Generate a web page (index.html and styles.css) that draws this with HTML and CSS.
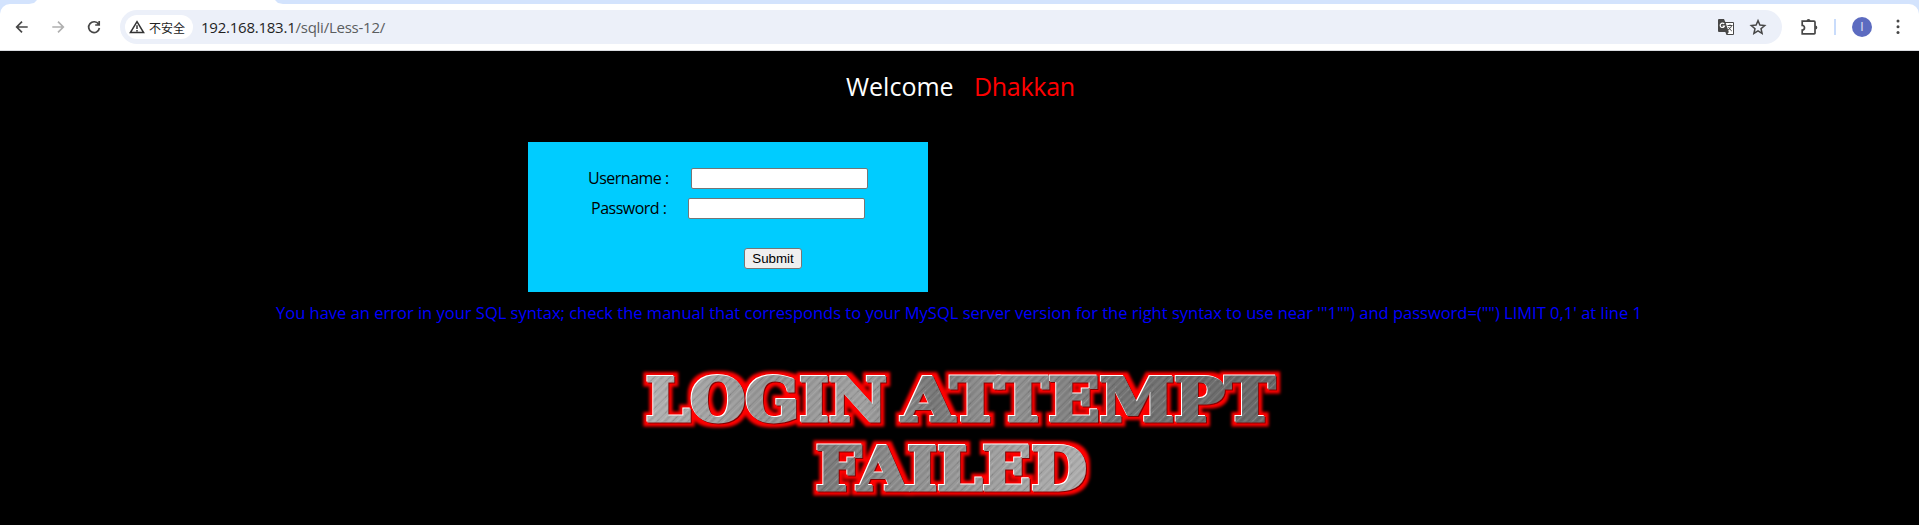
FILE: index.html
```html
<!DOCTYPE html>
<html lang="zh-CN">
<head>
<meta charset="utf-8">
<title>Less-12</title>
<link rel="stylesheet" href="styles.css">
</head>
<body>
<header class="browser">
  <div class="tabstrip"><span class="tab-left"></span><span class="tab-active"></span></div>
  <div class="toolbar">
    <nav class="nav">
      <svg class="ico" viewBox="0 0 20 20"><path d="M15.700 10H5M10 4.700L4.700 10l5.300 5.300"/></svg>
      <svg class="ico dim" viewBox="0 0 20 20"><path d="M4.300 10H15M10 4.700l5.300 5.300-5.300 5.300"/></svg>
      <svg class="ico" viewBox="0 0 20 20"><path d="M14.600 7.200A5.400 5.400 0 1 0 15.400 11M15.200 4v4h-4"/></svg>
    </nav>
    <div class="omnibox">
      <div class="chip">
        <svg class="warn" viewBox="0 0 16 14"><path d="M8 1.600L14.600 12.600H1.400ZM8 5.200v3.800M8 10v1.400"/></svg>
        <span class="chip-text">不安全</span>
      </div>
      <span class="url">192.168.183.1<span class="path">/sqli/Less-12/</span></span>
      <svg class="translate" viewBox="0 0 18 18"><path class="solid" d="M2 1h5l1.300 3H16a1 1 0 0 1 1 1v11a1 1 0 0 1-1 1H9.500l-1.200-3H2a1 1 0 0 1-1-1V2a1 1 0 0 1 1-1Z"/><path class="paper" d="M8.700 5H16v11h-5.500l1.300-2Z"/><path class="g" d="M7.200 6A2.200 2.200 0 1 0 7.500 8H5.500"/><path class="thin" d="M10.500 7.500h5M13 6.500v1M14.600 7.500c-.4 2-2 3.600-3.600 4.500M11.500 9c.8 1.600 2 3 3.300 4"/></svg>
      <svg class="star" viewBox="0 0 18 18"><path d="M9 2.600l1.900 4.500 4.800.4-3.700 3.200 1.100 4.700L9 12.900l-4.100 2.500L6 10.700 2.300 7.500l4.800-.4Z"/></svg>
    </div>
    <svg class="puzzle" viewBox="0 0 20 20"><path d="M3.200 4.200H15a1 1 0 0 1 1 1V16a.8.8 0 0 1-.8.800H3.200V13a2.300 2.300 0 0 0 0-4.600Z"/><path class="solid" d="M7.500 4a2 2 0 0 1 4 0ZM16.300 8.500a2 2 0 0 1 0 4Z"/></svg>
    <span class="divider"></span>
    <span class="avatar">I</span>
    <svg class="dots" viewBox="0 0 4 16"><circle cx="2" cy="2" r="1.500"/><circle cx="2" cy="7.700" r="1.500"/><circle cx="2" cy="13.400" r="1.500"/></svg>
  </div>
</header>
<main class="page">
  <h1 class="welcome"><span class="hello">Welcome</span><span class="name">Dhakkan</span></h1>
  <form class="login">
    <div class="row row-user"><label class="lab-user" for="u">Username :</label><input id="u" class="field" type="text"></div>
    <div class="row row-pass"><label class="lab-pass" for="p">Password :</label><input id="p" class="field" type="text"></div>
    <button class="submit" type="button">Submit</button>
  </form>
  <p class="error">You have an error in your SQL syntax; check the manual that corresponds to your MySQL server version for the right syntax to use near '"1"") and password=("") LIMIT 0,1' at line 1</p>
  <svg class="failed" viewBox="630 360 660 150" width="660" height="150">
    <defs>
      <linearGradient id="metal" gradientUnits="userSpaceOnUse" x1="640" y1="370" x2="1280" y2="400">
        <stop offset="0" stop-color="#b4b4b4"/><stop offset=".2" stop-color="#959595"/><stop offset=".35" stop-color="#a0a0a0"/><stop offset=".46" stop-color="#777"/><stop offset=".56" stop-color="#959595"/><stop offset=".75" stop-color="#747474"/><stop offset="1" stop-color="#686868"/>
      </linearGradient>
      <linearGradient id="metal2" gradientUnits="userSpaceOnUse" x1="815" y1="440" x2="1090" y2="490">
        <stop offset="0" stop-color="#777"/><stop offset=".4" stop-color="#929292"/><stop offset="1" stop-color="#b0b0b0"/>
      </linearGradient>
      <pattern id="brush" patternUnits="userSpaceOnUse" width="11" height="11" patternTransform="rotate(45)">
        <path d="M1 0v11M6.500 0v11" stroke="#fff" stroke-opacity=".12" stroke-width=".8"/><path d="M3.500 0v11M9 0v11" stroke="#000" stroke-opacity=".09" stroke-width="1"/>
      </pattern>
      <filter id="glow" filterUnits="userSpaceOnUse" x="630" y="360" width="660" height="150" color-interpolation-filters="sRGB">
        <feMorphology in="SourceAlpha" operator="dilate" radius="4" result="fat"/>
        <feGaussianBlur in="fat" stdDeviation="1.600" result="soft"/>
        <feFlood flood-color="#f00"/><feComposite in2="soft" operator="in" result="red"/>
        <feOffset in="SourceAlpha" dx="-.8" dy="-.8" result="o"/>
        <feFlood flood-color="#fff"/><feComposite in2="o" operator="in" result="white"/>
        <feOffset in="SourceAlpha" dx=".8" dy=".8" result="o2"/>
        <feFlood flood-color="#800"/><feComposite in2="o2" operator="in" result="dark"/>
        <feMerge><feMergeNode in="red"/><feMergeNode in="dark"/><feMergeNode in="white"/><feMergeNode in="SourceGraphic"/></feMerge>
      </filter>
    </defs>
    <g class="banner" filter="url(#glow)">
      <text class="m1" x="646" y="421" textLength="241" lengthAdjust="spacingAndGlyphs">LOGIN</text>
      <text class="m1" x="902" y="421" textLength="373" lengthAdjust="spacingAndGlyphs">ATTEMPT</text>
      <text class="m2" x="816" y="490" textLength="271" lengthAdjust="spacingAndGlyphs">FAILED</text>
    </g>
    <g class="banner grain" aria-hidden="true">
      <text x="646" y="421" textLength="241" lengthAdjust="spacingAndGlyphs">LOGIN</text>
      <text x="902" y="421" textLength="373" lengthAdjust="spacingAndGlyphs">ATTEMPT</text>
      <text x="816" y="490" textLength="271" lengthAdjust="spacingAndGlyphs">FAILED</text>
    </g>
  </svg>
</main>
</body>
</html>
```

FILE: styles.css
```css
* { box-sizing: border-box; }
body { margin: 0; height: 525px; overflow: hidden; background: #000; font-family: "Open Sans", "Noto Sans", "Noto Sans CJK SC", sans-serif; font-size: 16px; }
.browser { height: 51px; background: #d3e3fd; border-bottom: 1px solid #dadce0; }
.tabstrip { height: 4px; display: flex; }
.tab-left { width: 29px; }
.tab-active { width: 254px; background: #fff; clip-path: polygon(8px 0, 246px 0, 249px 3px, 254px 4px, 0 4px, 5px 3px); }
.toolbar { height: 46px; background: #fff; border-radius: 10px 10px 0 0; display: flex; align-items: center; padding-left: 12px; }
svg { display: block; flex: none; }
.nav { display: flex; gap: 16px; width: 108px; }
.ico { width: 20px; height: 20px; fill: none; stroke: #474747; stroke-width: 1.7; }
.dim { stroke: #b0b0b0; }
.omnibox { height: 34px; width: 1662px; border-radius: 17px; background: #ecf0f9; display: flex; align-items: center; padding-left: 5px; }
.chip { width: 68px; height: 24px; border-radius: 12px; background: #fff; display: flex; align-items: center; padding-left: 4px; gap: 4px; }
.warn { width: 16px; height: 14px; fill: none; stroke: #333; stroke-width: 1.5; }
.chip-text { font: 12px "Noto Sans CJK SC", sans-serif; color: #222; white-space: nowrap; }
.url { margin-left: 8px; flex: none; width: 1516px; font-size: 15px; letter-spacing: -.24px; color: #1f1f1f; white-space: nowrap; }
.path { color: #5a5d60; }
.translate, .star { width: 18px; height: 18px; }
.star { margin-left: 14px; fill: none; stroke: #474747; stroke-width: 1.5; }
.solid { fill: #474747; stroke: none; }
.paper { fill: #fff; }
.g { fill: none; stroke: #fff; stroke-width: 1.2; }
.thin { fill: none; stroke: #474747; stroke-width: 1; }
.puzzle { width: 20px; height: 20px; margin-left: 17px; fill: none; stroke: #474747; stroke-width: 1.7; }
.divider { width: 2px; height: 16px; background: #c9dcfb; margin-left: 15px; }
.avatar { width: 20px; height: 20px; border-radius: 50%; background: #5c6bc0; color: #e3e6f5; font-size: 12px; line-height: 20px; text-align: center; margin-left: 16px; }
.dots { width: 4px; height: 16px; margin-left: 24px; fill: #474747; }
.page { display: flex; flex-direction: column; }
.welcome { margin: 16px 0 0 846px; font-size: 25px; font-weight: 400; line-height: 38px; height: 38px; display: flex; }
.hello { color: #fff; width: 128px; }
.name { color: #f00; letter-spacing: -.3px; }
.login { margin: 37px 0 0 528px; width: 400px; height: 150px; background: #0cf; padding-top: 26px; }
.row { display: flex; align-items: center; height: 21px; margin-bottom: 9px; white-space: nowrap; }
.row label { letter-spacing: -.5px; padding-bottom: 2px; }
.row-user { padding-left: 60px; }
.row-pass { padding-left: 63px; }
.lab-user { width: 103px; }
.lab-pass { width: 97px; }
.field { width: 177px; height: 21px; border: 1px solid #767676; border-radius: 2px; background: #fff; padding: 0; }
.submit { display: block; width: 58px; height: 21px; margin: 29px 0 0 216px; padding: 0; border: 1px solid #767676; border-radius: 3px; background: #efefef; color: #000; font: 13.33px "Liberation Sans", Arial, sans-serif; }
.error { margin: 10px 0 0 276px; height: 22px; line-height: 22px; font-size: 16.5px; color: #00f; white-space: nowrap; }
.failed { margin: 36px 0 0 630px; }
.banner { font: bold 60px "DejaVu Serif", serif; stroke-width: 3; }
.m1 { fill: url(#metal); stroke: url(#metal); }
.m2 { fill: url(#metal2); stroke: url(#metal2); }
.grain { fill: url(#brush); stroke: url(#brush); }
```
